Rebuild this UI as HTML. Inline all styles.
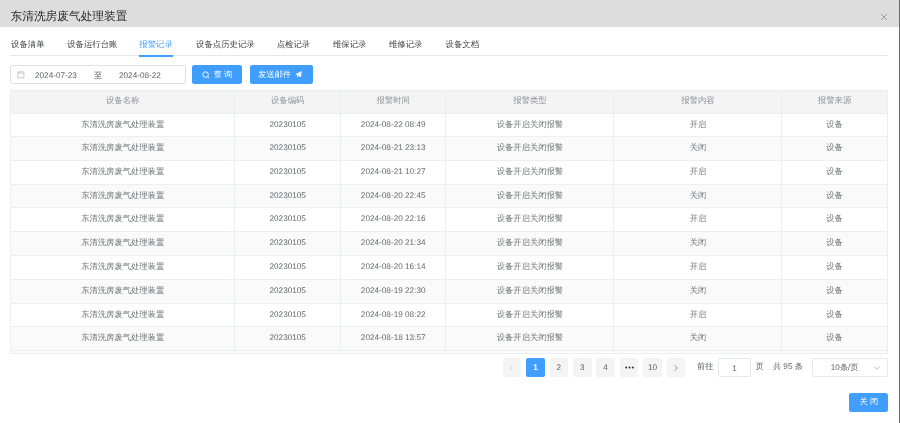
<!DOCTYPE html>
<html><head><meta charset="utf-8">
<style>
*{margin:0;padding:0;box-sizing:border-box}
html,body{width:900px;height:423px;overflow:hidden;background:#fff}
body{position:relative;font-family:"Liberation Sans",sans-serif;color:#606266;font-size:8.2px;text-rendering:geometricPrecision}
.a{position:absolute}
#hdr{left:0;top:0;width:898.5px;height:26.5px;background:#dddddd}
#title{left:10.5px;top:8.8px;font-size:11.7px;line-height:16px;color:#26272a;white-space:nowrap}
#x{left:880px;top:13px;width:8px;height:8px}
#strip{left:898.5px;top:0;width:1.5px;height:423px;background:#6b6b6b}
.tab{position:absolute;top:38.4px;font-size:8.4px;line-height:12px;color:#3a3b3f;white-space:nowrap}
.tab.on{color:#409eff}
#tabline{left:10px;top:55px;width:878px;height:1.2px;background:#e4e7ed}
#tabbar{left:139px;top:55px;width:34px;height:1.5px;background:#409eff}
#date{left:10px;top:65px;width:175.5px;height:18.5px;border:1px solid #dcdfe6;border-radius:2px;background:#fff}
.dt{position:absolute;top:3.6px;line-height:12px;color:#606266;white-space:nowrap}
.btn{position:absolute;top:65px;height:18.6px;background:#409eff;border-radius:2.3px;color:#fff;line-height:19.6px;white-space:nowrap}
.tr{position:absolute;left:0;width:900px;height:23px}
.r{position:absolute;left:10px;width:877px}
.c{position:absolute;top:0;height:100%;text-align:center;white-space:nowrap;color:#606266}
.c.cj{font-size:8.3px;line-height:22.2px;color:#717377}
.c.dg{line-height:23.9px;color:#66686c}
#th{background:#f5f4f5}
.th .c.cj{line-height:21.2px;color:#8e9196;font-size:8.4px}
.vl{position:absolute;width:1px;background:#ebeef5}
.hl{position:absolute;left:10px;width:878px;height:1px;background:#ebeef5}
.pg{position:absolute;top:358.2px;height:18.5px;width:18.5px;background:#f4f4f5;border-radius:2px;line-height:19.4px;text-align:center;color:#606266}
.pg.on{background:#409eff;color:#fff;font-weight:bold}
.pt{position:absolute;top:360.9px;line-height:12px;color:#606266;white-space:nowrap}
.box{position:absolute;top:358.4px;height:18.2px;border:1px solid #e4e7ed;border-radius:2px;background:#fff}
#root{position:absolute;left:0;top:0;width:900px;height:423px;will-change:transform}

</style></head><body><div id="root">
<div class="a" id="hdr"></div>
<div class="a" id="title">东清洗房废气处理装置</div>
<svg class="a" id="x" viewBox="0 0 8 8"><path d="M1 1L7 7M7 1L1 7" stroke="#909399" stroke-width="0.9" fill="none"/></svg>
<div class="a" id="strip"></div>

<div class="tab" style="left:11px">设备清单</div>
<div class="tab" style="left:67.2px">设备运行台账</div>
<div class="tab on" style="left:139.3px">报警记录</div>
<div class="tab" style="left:196px">设备点历史记录</div>
<div class="tab" style="left:276.7px">点检记录</div>
<div class="tab" style="left:332.9px">维保记录</div>
<div class="tab" style="left:388.9px">维修记录</div>
<div class="tab" style="left:445.6px">设备文档</div>
<div class="a" id="tabline"></div>
<div class="a" id="tabbar"></div>

<div class="a" id="date">
 <svg style="position:absolute;left:6.2px;top:5.4px" width="8" height="8" viewBox="0 0 8 8"><rect x="0.85" y="0.85" width="6.1" height="6.1" fill="none" stroke="#b4b7bd" stroke-width="0.7"/><path d="M0.85 2.1H6.95" stroke="#b4b7bd" stroke-width="0.8"/><path d="M3.9 5.5V6.9" stroke="#c8cad0" stroke-width="0.6"/></svg>
 <div class="dt" style="left:24px">2024-07-23</div>
 <div class="dt" style="left:83px;color:#505255">至</div>
 <div class="dt" style="left:108px">2024-08-22</div>
</div>

<div class="btn" style="left:192px;width:50.3px">
 <svg style="position:absolute;left:10px;top:6px" width="8" height="8" viewBox="0 0 8 8"><circle cx="3.6" cy="3.6" r="2.8" fill="none" stroke="#fff" stroke-width="0.9"/><path d="M5.6 5.6L7 7" stroke="#fff" stroke-width="0.9"/></svg>
 <span style="position:absolute;left:21.8px;letter-spacing:2px">查询</span>
</div>
<div class="btn" style="left:249.5px;width:63.3px">
 <span style="position:absolute;left:8.8px">发送邮件</span>
 <svg style="position:absolute;left:45.5px;top:5.9px" width="7" height="7" viewBox="0 0 7 7"><path d="M6.7 0.1L0.2 3.2L2.2 4.0L2.4 6.8L3.5 5.1L5.9 6.2Z" fill="#fff"/><path d="M6.7 0.1L2.3 4.1" stroke="#409eff" stroke-width="0.35"/></svg>
</div>

<div class="a" id="th" style="left:10px;top:90px;width:877px;height:23px"></div>
<div class="tr th" style="top:90px"><div class="c cj" style="left:10.50px;width:224.40px">设备名称</div><div class="c cj" style="left:234.90px;width:105.60px">设备编码</div><div class="c cj" style="left:340.50px;width:105.40px">报警时间</div><div class="c cj" style="left:445.90px;width:168.10px">报警类型</div><div class="c cj" style="left:614.00px;width:167.90px">报警内容</div><div class="c cj" style="left:781.90px;width:105.40px">报警来源</div></div>
<div class="r" style="top:113px;height:23px;background:#fff"></div>
<div class="tr" style="top:113px"><div class="c cj" style="left:10.50px;width:224.40px">东清洗房废气处理装置</div><div class="c dg" style="left:234.90px;width:105.60px">20230105</div><div class="c dg" style="left:340.50px;width:105.40px">2024-08-22 08:49</div><div class="c cj" style="left:445.90px;width:168.10px">设备开启关闭报警</div><div class="c cj" style="left:614.00px;width:167.90px">开启</div><div class="c cj" style="left:781.90px;width:105.40px">设备</div></div>
<div class="r" style="top:136px;height:24px;background:#fafafa"></div>
<div class="tr" style="top:136px"><div class="c cj" style="left:10.50px;width:224.40px">东清洗房废气处理装置</div><div class="c dg" style="left:234.90px;width:105.60px">20230105</div><div class="c dg" style="left:340.50px;width:105.40px">2024-08-21 23:13</div><div class="c cj" style="left:445.90px;width:168.10px">设备开启关闭报警</div><div class="c cj" style="left:614.00px;width:167.90px">关闭</div><div class="c cj" style="left:781.90px;width:105.40px">设备</div></div>
<div class="r" style="top:160px;height:24px;background:#fff"></div>
<div class="tr" style="top:160px"><div class="c cj" style="left:10.50px;width:224.40px">东清洗房废气处理装置</div><div class="c dg" style="left:234.90px;width:105.60px">20230105</div><div class="c dg" style="left:340.50px;width:105.40px">2024-08-21 10:27</div><div class="c cj" style="left:445.90px;width:168.10px">设备开启关闭报警</div><div class="c cj" style="left:614.00px;width:167.90px">开启</div><div class="c cj" style="left:781.90px;width:105.40px">设备</div></div>
<div class="r" style="top:184px;height:23px;background:#fafafa"></div>
<div class="tr" style="top:184px"><div class="c cj" style="left:10.50px;width:224.40px">东清洗房废气处理装置</div><div class="c dg" style="left:234.90px;width:105.60px">20230105</div><div class="c dg" style="left:340.50px;width:105.40px">2024-08-20 22:45</div><div class="c cj" style="left:445.90px;width:168.10px">设备开启关闭报警</div><div class="c cj" style="left:614.00px;width:167.90px">关闭</div><div class="c cj" style="left:781.90px;width:105.40px">设备</div></div>
<div class="r" style="top:207px;height:24px;background:#fff"></div>
<div class="tr" style="top:207px"><div class="c cj" style="left:10.50px;width:224.40px">东清洗房废气处理装置</div><div class="c dg" style="left:234.90px;width:105.60px">20230105</div><div class="c dg" style="left:340.50px;width:105.40px">2024-08-20 22:16</div><div class="c cj" style="left:445.90px;width:168.10px">设备开启关闭报警</div><div class="c cj" style="left:614.00px;width:167.90px">开启</div><div class="c cj" style="left:781.90px;width:105.40px">设备</div></div>
<div class="r" style="top:231px;height:24px;background:#fafafa"></div>
<div class="tr" style="top:231px"><div class="c cj" style="left:10.50px;width:224.40px">东清洗房废气处理装置</div><div class="c dg" style="left:234.90px;width:105.60px">20230105</div><div class="c dg" style="left:340.50px;width:105.40px">2024-08-20 21:34</div><div class="c cj" style="left:445.90px;width:168.10px">设备开启关闭报警</div><div class="c cj" style="left:614.00px;width:167.90px">关闭</div><div class="c cj" style="left:781.90px;width:105.40px">设备</div></div>
<div class="r" style="top:255px;height:24px;background:#fff"></div>
<div class="tr" style="top:255px"><div class="c cj" style="left:10.50px;width:224.40px">东清洗房废气处理装置</div><div class="c dg" style="left:234.90px;width:105.60px">20230105</div><div class="c dg" style="left:340.50px;width:105.40px">2024-08-20 16:14</div><div class="c cj" style="left:445.90px;width:168.10px">设备开启关闭报警</div><div class="c cj" style="left:614.00px;width:167.90px">开启</div><div class="c cj" style="left:781.90px;width:105.40px">设备</div></div>
<div class="r" style="top:279px;height:24px;background:#fafafa"></div>
<div class="tr" style="top:279px"><div class="c cj" style="left:10.50px;width:224.40px">东清洗房废气处理装置</div><div class="c dg" style="left:234.90px;width:105.60px">20230105</div><div class="c dg" style="left:340.50px;width:105.40px">2024-08-19 22:30</div><div class="c cj" style="left:445.90px;width:168.10px">设备开启关闭报警</div><div class="c cj" style="left:614.00px;width:167.90px">关闭</div><div class="c cj" style="left:781.90px;width:105.40px">设备</div></div>
<div class="r" style="top:303px;height:23px;background:#fff"></div>
<div class="tr" style="top:303px"><div class="c cj" style="left:10.50px;width:224.40px">东清洗房废气处理装置</div><div class="c dg" style="left:234.90px;width:105.60px">20230105</div><div class="c dg" style="left:340.50px;width:105.40px">2024-08-19 08:22</div><div class="c cj" style="left:445.90px;width:168.10px">设备开启关闭报警</div><div class="c cj" style="left:614.00px;width:167.90px">开启</div><div class="c cj" style="left:781.90px;width:105.40px">设备</div></div>
<div class="r" style="top:326px;height:24px;background:#fafafa"></div>
<div class="tr" style="top:326px"><div class="c cj" style="left:10.50px;width:224.40px">东清洗房废气处理装置</div><div class="c dg" style="left:234.90px;width:105.60px">20230105</div><div class="c dg" style="left:340.50px;width:105.40px">2024-08-18 13:57</div><div class="c cj" style="left:445.90px;width:168.10px">设备开启关闭报警</div><div class="c cj" style="left:614.00px;width:167.90px">关闭</div><div class="c cj" style="left:781.90px;width:105.40px">设备</div></div>
<div class="a" style="left:11px;top:351px;width:876px;height:2px;background:#fbfbfd"></div>
<div class="hl" style="top:90px"></div><div class="hl" style="top:113px"></div><div class="hl" style="top:136px"></div><div class="hl" style="top:160px"></div><div class="hl" style="top:184px"></div><div class="hl" style="top:207px"></div><div class="hl" style="top:231px"></div><div class="hl" style="top:255px"></div><div class="hl" style="top:279px"></div><div class="hl" style="top:303px"></div><div class="hl" style="top:326px"></div><div class="hl" style="top:350px"></div><div class="hl" style="top:353px"></div>
<div class="vl" style="left:10px;top:90px;height:261px"></div><div class="vl" style="left:234px;top:90px;height:261px"></div><div class="vl" style="left:340px;top:90px;height:261px"></div><div class="vl" style="left:445px;top:90px;height:261px"></div><div class="vl" style="left:613px;top:90px;height:261px"></div><div class="vl" style="left:781px;top:90px;height:261px"></div><div class="vl" style="left:887px;top:90px;height:261px"></div>
<div class="vl" style="left:10px;top:350px;height:4px"></div><div class="vl" style="left:887px;top:350px;height:4px"></div>

<div class="pg" style="left:502.8px"><svg style="position:absolute;left:6.6px;top:6.5px" width="4" height="6" viewBox="0 0 4 6"><path d="M3.3 0.4L0.8 3L3.3 5.6" fill="none" stroke="#c0c4cc" stroke-width="0.7"/></svg></div>
<div class="pg on" style="left:526.4px">1</div>
<div class="pg" style="left:549.6px">2</div>
<div class="pg" style="left:573px">3</div>
<div class="pg" style="left:596.4px">4</div>
<div class="pg" style="left:619.8px"><svg style="position:absolute;left:5px;top:7.6px" width="9" height="3" viewBox="0 0 9 3"><circle cx="1.2" cy="1.5" r="1" fill="#303133"/><circle cx="4.5" cy="1.5" r="1" fill="#303133"/><circle cx="7.8" cy="1.5" r="1" fill="#303133"/></svg></div>
<div class="pg" style="left:643.2px">10</div>
<div class="pg" style="left:666.6px"><svg style="position:absolute;left:7.8px;top:6.5px" width="4" height="6" viewBox="0 0 4 6"><path d="M0.7 0.4L3.2 3L0.7 5.6" fill="none" stroke="#606266" stroke-width="0.7"/></svg></div>
<div class="pt" style="left:697px">前往</div>
<div class="box" style="left:718.4px;width:32.3px;text-align:center;line-height:19px">1</div>
<div class="pt" style="left:755.5px">页</div>
<div class="pt" style="left:772.9px">共 95 条</div>
<div class="box" style="left:812.3px;width:75.3px;line-height:18.6px;border-color:#e6e8ed">
 <span style="position:absolute;left:17.5px">10条/页</span>
 <svg style="position:absolute;left:61px;top:7px" width="6" height="4" viewBox="0 0 6 4"><path d="M0.3 0.5L3 3.3L5.7 0.5" fill="none" stroke="#a0a3a9" stroke-width="0.75"/></svg>
</div>

<div class="btn" style="left:849.2px;top:393.1px;width:38.7px;height:18.8px;line-height:18.8px">
 <span style="position:absolute;left:10.2px;letter-spacing:2.5px">关闭</span>
</div>

</div></body></html>
